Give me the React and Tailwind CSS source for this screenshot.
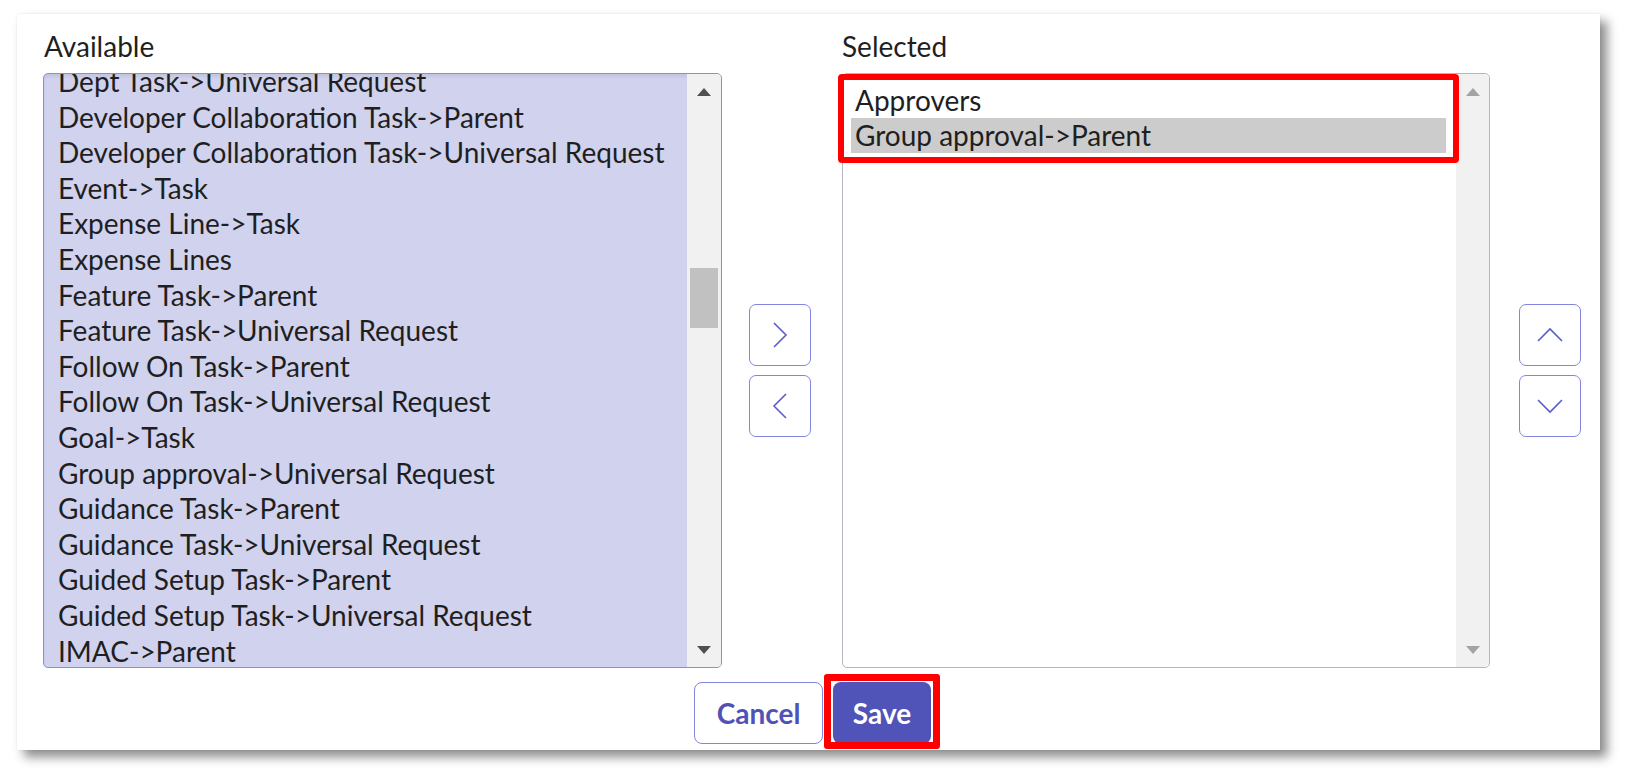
import React from 'react';

const available = [
  'Dept Task->Universal Request',
  'Developer Collaboration Task->Parent',
  'Developer Collaboration Task->Universal Request',
  'Event->Task',
  'Expense Line->Task',
  'Expense Lines',
  'Feature Task->Parent',
  'Feature Task->Universal Request',
  'Follow On Task->Parent',
  'Follow On Task->Universal Request',
  'Goal->Task',
  'Group approval->Universal Request',
  'Guidance Task->Parent',
  'Guidance Task->Universal Request',
  'Guided Setup Task->Parent',
  'Guided Setup Task->Universal Request',
  'IMAC->Parent',
  'IMAC->Universal Request',
];

function Arrow({ dir, color }) {
  return (
    <svg width="16" height="8" viewBox="0 0 16 8">
      {dir === 'up' ? (
        <polygon points="1,8 15,8 8,0" fill={color} />
      ) : (
        <polygon points="1,0 15,0 8,8" fill={color} />
      )}
    </svg>
  );
}

function Chevron({ dir }) {
  const pts = {
    right: '2,2 14,14 2,26',
    left: '14,2 2,14 14,26',
    up: '2,14 14,2 26,14',
    down: '2,2 14,14 26,2',
  }[dir];
  const vertical = dir === 'left' || dir === 'right';
  return (
    <svg
      width={vertical ? 16 : 28}
      height={vertical ? 28 : 16}
      viewBox={vertical ? '0 0 16 28' : '0 0 28 16'}
    >
      <polyline points={pts} fill="none" stroke="#5a5dcc" strokeWidth="1.6" />
    </svg>
  );
}

function MoveButton({ dir }) {
  return (
    <button className="w-[62px] h-[62px] rounded-[7px] border-[1.5px] border-[#8286dc] bg-white flex items-center justify-center">
      <Chevron dir={dir} />
    </button>
  );
}

export default function App() {
  return (
    <div
      className="w-[1648px] h-[776px] bg-white pt-[14px] pl-[17px]"
      style={{ fontFamily: 'Lato, "Open Sans", sans-serif' }}
    >
      <div className="relative w-[1583px] h-[736px] bg-white shadow-[7px_7px_10px_rgba(0,0,0,0.45),0_0_2px_rgba(0,0,0,0.08)]">
        {/* labels + lists */}
        <div className="flex pl-[26px] pt-[14px]">
          {/* Available */}
          <div className="w-[679px]">
            <div className="h-[36px] leading-[36px] text-[28px] text-[#1f1f1f] pl-[1px] mb-[9px]">Available</div>
            <div className="flex h-[595px] rounded-[5px] border border-[#8a8ddb] overflow-hidden bg-[#d0d2ee] shadow-[inset_0_3px_3px_rgba(0,0,0,0.06)]">
              <div className="flex-1 overflow-hidden">
                <div className="-mt-[10px]">
                  {available.map((item) => (
                    <div key={item} className="h-[35.6px] leading-[35.6px] pl-[14px] text-[28px] text-[#1f1f1f] whitespace-nowrap">
                      {item}
                    </div>
                  ))}
                </div>
              </div>
              <div className="w-[34px] bg-[#f1f1f1] flex flex-col items-center">
                <div className="h-[34px] flex items-center justify-center pt-[2px]">
                  <Arrow dir="up" color="#505050" />
                </div>
                <div className="flex-1 w-full px-[3px] pt-[160px]">
                  <div className="h-[60px] bg-[#c1c1c1]" />
                </div>
                <div className="h-[34px] flex items-center justify-center">
                  <Arrow dir="down" color="#505050" />
                </div>
              </div>
            </div>
          </div>

          {/* left/right buttons */}
          <div className="w-[120px] pl-[27px] pt-[45px] flex flex-col justify-center gap-[9px]">
            <MoveButton dir="right" />
            <MoveButton dir="left" />
          </div>

          {/* Selected */}
          <div className="w-[648px]">
            <div className="h-[36px] leading-[36px] text-[28px] text-[#1f1f1f] mb-[9px]">Selected</div>
            <div className="relative flex h-[595px] rounded-[5px] border border-[#b4b6bf] bg-white">
              <div className="flex-1 pl-[8px] pr-[10px] pt-[9px] overflow-hidden">
                <div className="h-[35px] leading-[35px] px-[4px] text-[28px] text-[#1f1f1f]">Approvers</div>
                <div className="h-[35px] leading-[35px] px-[4px] text-[28px] text-[#1f1f1f] bg-[#cccccc]">Group approval-&gt;Parent</div>
              </div>
              <div className="w-[33px] bg-[#f1f1f1] flex flex-col items-center justify-between rounded-r-[5px]">
                <div className="h-[34px] flex items-center justify-center pt-[2px]">
                  <Arrow dir="up" color="#a3a3a3" />
                </div>
                <div className="h-[34px] flex items-center justify-center">
                  <Arrow dir="down" color="#a3a3a3" />
                </div>
              </div>
              {/* annotation */}
              <div className="absolute -left-[5px] top-0 w-[621px] h-[89px] border-[6px] border-[#ff0000] rounded-[4px]" />
            </div>
          </div>

          {/* up/down buttons */}
          <div className="pl-[29px] pt-[45px] flex flex-col justify-center gap-[9px]">
            <MoveButton dir="up" />
            <MoveButton dir="down" />
          </div>
        </div>

        {/* footer */}
        <div className="flex justify-center gap-[10px] pl-[8px] mt-[14px]">
          <button className="w-[129px] h-[62px] rounded-[8px] border-[1.5px] border-[#8286dc] bg-white text-[28px] font-bold text-[#4f53b8]">
            Cancel
          </button>
          <div className="relative">
            <button className="w-[98px] h-[62px] rounded-[8px] bg-[#5053b8] text-[28px] font-bold text-white">
              Save
            </button>
            <div className="absolute -left-[9px] -top-[8px] -right-[9px] -bottom-[5px] border-[7px] border-[#ff0000] rounded-[3px]" />
          </div>
        </div>
      </div>
    </div>
  );
}
